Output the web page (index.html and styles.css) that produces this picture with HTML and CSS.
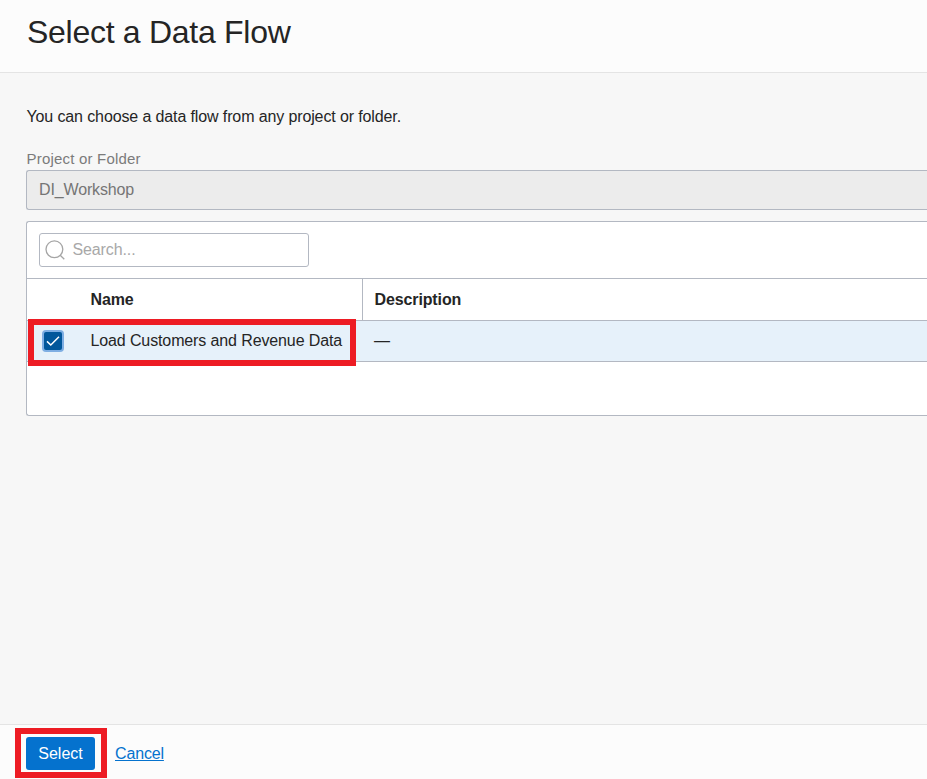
FILE: index.html
```html
<!DOCTYPE html>
<html lang="en">
<head>
<meta charset="utf-8">
<title>Select a Data Flow</title>
<link rel="stylesheet" href="styles.css">
</head>
<body>
<div class="drawer">
  <header class="header"><h1>Select a Data Flow</h1></header>
  <main class="content">
    <p class="intro"><span>You can choose a data flow from any project or folder.</span></p>
    <div class="label"><span>Project or Folder</span></div>
    <div class="field"><span>DI_Workshop</span></div>
    <section class="panel">
      <div class="toolbar">
        <div class="search">
          <svg class="search-icon" width="22" height="22" viewBox="0 0 22 22" fill="none" stroke="#a5a5a5" stroke-width="1.3"><circle cx="10.4" cy="10.3" r="8.4"/><path d="M16.2 16.2L20.3 20.3"/></svg>
          <span>Search...</span>
        </div>
      </div>
      <div class="row head">
        <div class="cell name"><span>Name</span></div>
        <div class="cell desc"><span>Description</span></div>
      </div>
      <div class="row selected">
        <div class="cell check"><div class="checkbox"><svg width="18" height="18" viewBox="0 0 18 18" fill="none" stroke="#fff" stroke-width="1.5"><path d="M3 9.4L6.8 13L15 4.8"/></svg></div></div>
        <div class="cell flow"><span>Load Customers and Revenue Data</span></div>
        <div class="cell value"><span>—</span></div>
        <div class="mark mark-row"></div>
      </div>
    </section>
  </main>
  <footer class="footer">
    <div class="button"><span>Select</span><div class="mark mark-button"></div></div>
    <a class="cancel">Cancel</a>
  </footer>
</div>
</body>
</html>
```

FILE: styles.css
```css
* { box-sizing: border-box; }
body {
  margin: 0;
  font: 16px/20px "Liberation Sans", Arial, sans-serif;
  color: #252525;
  overflow: hidden;
}
.drawer { display: flex; flex-direction: column; height: 779px; background: #f7f7f7; }
.header { height: 73px; padding: 12px 27px; background: #fcfcfc; border-bottom: 1px solid #e4e4e4; }
h1 { margin: 0; font-size: 32px; line-height: 40px; font-weight: 400; letter-spacing: -0.28px; white-space: nowrap; }
.content { flex: 1; padding: 34px 0 0 26px; }
.intro { margin: 0; height: 42px; padding-left: 0.5px; letter-spacing: -0.12px; }
.label { height: 21px; padding-left: 0.5px; font-size: 15px; letter-spacing: 0.2px; color: #7b7b7b; }
.field {
  height: 40px;
  padding: 9px 12px;
  background: #ececec;
  border: 1px solid #b3b8c2;
  border-right: 0;
  border-radius: 3px 0 0 3px;
  letter-spacing: -0.14px;
  color: #757575;
}
.panel {
  height: 195px;
  margin-top: 11px;
  background: #fff;
  border: 1px solid #b3b8c2;
  border-right: 0;
  border-radius: 3px 0 0 3px;
}
.toolbar { height: 56px; padding: 11px 12px; }
.search {
  display: flex;
  align-items: center;
  width: 270px;
  height: 34px;
  padding-left: 4px;
  border: 1px solid #b3b8c2;
  border-radius: 3px;
  letter-spacing: -0.12px;
  color: #a8a8a8;
}
.search-icon { margin-right: 6.5px; }
.row { display: flex; position: relative; }
.head { height: 43px; border-top: 1px solid #b3b8c2; border-bottom: 1px solid #b3b8c2; font-weight: 700; line-height: 41px; letter-spacing: -0.12px; }
.selected { height: 41px; background: #e6f1fa; border-bottom: 1px solid #b3b8c2; line-height: 39px; }
.name { width: 336px; padding-left: 63.5px; border-right: 1px solid #b3b8c2; }
.desc { padding-left: 11.5px; }
.check { width: 63.5px; padding: 11px 0 0 17px; }
.flow { width: 283.5px; letter-spacing: -0.12px; white-space: nowrap; }
.checkbox { width: 18px; height: 18px; border-radius: 2px; background: #01579b; box-shadow: 0 0 0 2px #7eaee3; }
.checkbox svg { display: block; }
.mark { position: absolute; border: 6px solid #ed1c24; }
.mark-row { left: 1px; top: -2px; width: 328px; height: 47px; }
.footer { display: flex; height: 55px; padding: 12px 0 0 26px; background: #fcfcfc; border-top: 1px solid #e4e4e4; }
.button { position: relative; width: 69px; height: 33px; border-radius: 3px; background: #0572ce; color: #fff; line-height: 33px; text-align: center; }
.mark-button { left: -11px; top: -9px; width: 92px; height: 50px; }
.cancel { margin-left: 20px; line-height: 33px; letter-spacing: -0.15px; color: #0572ce; text-decoration: underline; }
```
